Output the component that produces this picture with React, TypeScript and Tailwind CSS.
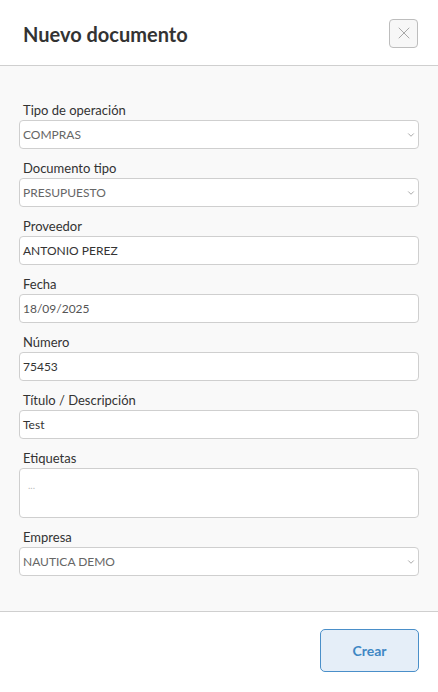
import { X, ChevronDown } from "lucide-react"

const Label = ({ text }: { text: string }) => (
  <label className="block pl-1 text-[13px] leading-[19px] text-[#333]">{text}</label>
)

const SelectField = ({ label, value }: { label: string; value: string }) => (
  <div className="mb-[10px]">
    <Label text={label} />
    <div className="h-[29px] flex items-center justify-between pl-[3px] pr-[2px] bg-white border border-[#cfcfcf] rounded-[4px]">
      <span className="text-[12px] text-[#666]">{value}</span>
      <ChevronDown className="w-[10px] h-[10px] text-[#999]" strokeWidth={2} />
    </div>
  </div>
)

const TextField = ({ label, value, muted }: { label: string; value: string; muted?: boolean }) => (
  <div className="mb-[10px]">
    <Label text={label} />
    <div className="h-[29px] flex items-center pl-[3px] bg-white border border-[#cfcfcf] rounded-[4px]">
      <span className={"text-[12px] " + (muted ? "text-[#555]" : "text-[#333]")}>{value}</span>
    </div>
  </div>
)

export default function App() {
  return (
    <div className="w-[438px] h-[692px] flex flex-col bg-white" style={{ fontFamily: "Lato, 'Noto Sans', sans-serif" }}>
      <div className="h-[66px] flex items-center justify-between pl-[23px] pr-[20px] border-b border-[#cfcfcf] shrink-0">
        <h1 className="text-[20px] font-bold text-[#333] pt-[3px]">Nuevo documento</h1>
        <button className="w-[29px] h-[29px] mt-[1px] flex items-center justify-center rounded-[4px] border border-[#bdbdbd] bg-[#f7f7f7]">
          <X className="w-[20px] h-[20px] text-[#a0a0a0]" strokeWidth={1.1} />
        </button>
      </div>

      <div className="flex-1 bg-[#f9f9f9] px-[19px] pt-[35px] border-b border-[#cfcfcf]">
        <SelectField label="Tipo de operación" value="COMPRAS" />
        <SelectField label="Documento tipo" value="PRESUPUESTO" />
        <TextField label="Proveedor" value="ANTONIO PEREZ" />
        <TextField label="Fecha" value="18/09/2025" muted />
        <TextField label="Número" value="75453" />
        <TextField label="Título / Descripción" value="Test" />
        <div className="mb-[10px]">
          <Label text="Etiquetas" />
          <div className="h-[50px] bg-white border border-[#cfcfcf] rounded-[4px] pl-[8px] pt-[2px]">
            <span className="text-[10px] leading-none text-[#bbb]">...</span>
          </div>
        </div>
        <SelectField label="Empresa" value="NAUTICA DEMO" />
      </div>

      <div className="h-[80px] shrink-0 flex items-start justify-end pr-[19px] pt-[17px]">
        <button className="w-[99px] h-[43px] rounded-[5px] border border-[#4a8fc9] bg-[#e5eef8] text-[14px] font-bold text-[#3f87c4]">
          Crear
        </button>
      </div>
    </div>
  )
}
